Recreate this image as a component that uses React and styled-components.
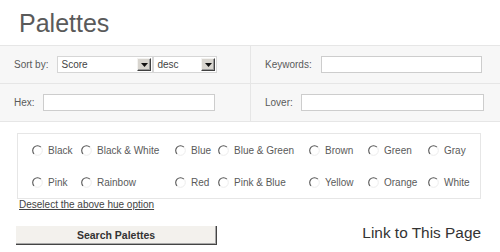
import React from "react";
import styled, { createGlobalStyle } from "styled-components";

const Global = createGlobalStyle`
  html, body { margin: 0; padding: 0; background: #fff; }
  body { font-family: "Liberation Sans", Arial, sans-serif; color: #555; }
`;

const Page = styled.div`
  width: 500px;
`;

const Header = styled.div`
  height: 34px;
  padding: 11px 0 0 19px;
`;

const Title = styled.h1`
  margin: 0;
  font-size: 25px;
  line-height: 25px;
  font-weight: normal;
  color: #5a5a5a;
`;

const Panel = styled.div`
  background: #f7f7f7;
  border-top: 1px solid #e6e6e6;
`;

const FormRow = styled.div`
  display: grid;
  grid-template-columns: 250px 250px;
  height: 37px;
  border-bottom: 1px solid #e6e6e6;
`;

const Cell = styled.div`
  display: flex;
  align-items: center;
  gap: ${(p) => p.$gap || 9}px;
  padding-left: 14px;
  border-left: ${(p) => (p.$divider ? "1px solid #e6e6e6" : "none")};
`;

const Label = styled.span`
  font-size: 10px;
  color: #5a5a5a;
`;

const TextInput = styled.input`
  box-sizing: border-box;
  width: ${(p) => p.$w}px;
  height: 17px;
  border: 1px solid #cdcdcd;
  background: #fff;
  padding: 0 3px;
  margin: 0;
  font: 10px "Liberation Sans", Arial, sans-serif;
  outline: none;
`;

const Selects = styled.div`
  display: flex;
`;

const SelectBox = styled.div`
  box-sizing: border-box;
  width: ${(p) => p.$w}px;
  height: 17px;
  display: flex;
  align-items: stretch;
  border: 1px solid #d6d6d6;
  background: #fff;
  padding: 1px;
`;

const SelectText = styled.span`
  flex: 1;
  font-size: 10px;
  line-height: 13px;
  color: #444;
  padding-left: 2px;
`;

const ArrowButton = styled.span`
  box-sizing: border-box;
  width: 14px;
  display: flex;
  align-items: center;
  justify-content: center;
  background: #d8d5cf;
  border-top: 1px solid #f4f3f1;
  border-left: 1px solid #f4f3f1;
  border-right: 1px solid #404040;
  border-bottom: 1px solid #404040;
  box-shadow: inset -1px -1px 0 #9a9a9a;
`;

const HueBox = styled.div`
  margin: 11px 19px 0 17px;
  border: 1px solid #e6e6e6;
  display: grid;
  grid-template-columns: 49px 94px 43px 91px 59px 60px 1fr;
  grid-auto-rows: 32px;
  padding-left: 14px;
`;

const HueOption = styled.label`
  display: flex;
  align-items: center;
  gap: 5px;
  font-size: 10px;
  color: #5a5a5a;
  white-space: nowrap;
`;

const Deselect = styled.a`
  display: block;
  width: fit-content;
  margin-left: 19px;
  font-size: 10px;
  line-height: 12px;
  color: #444;
  text-decoration: underline;
`;

const Bottom = styled.div`
  display: flex;
  align-items: center;
  justify-content: space-between;
  padding: 0 19px 0 16px;
  margin-top: 15px;
`;

const SearchButton = styled.button`
  box-sizing: border-box;
  width: 201px;
  height: 19px;
  margin: 0;
  padding: 0;
  background: #f3f1ed;
  border: none;
  border-right: 1px solid #444;
  border-bottom: 1px solid #444;
  box-shadow: inset -1px -1px 0 #a8a8a8;
  font: bold 10.5px "Liberation Sans", Arial, sans-serif;
  color: #333;
`;

const PageLink = styled.span`
  font-size: 15.4px;
  line-height: 18px;
  color: #333;
  margin-top: -5px;
`;

const Arrow = () => (
  <svg width="7" height="4" viewBox="0 0 7 4">
    <path d="M0 0h7L3.5 4z" fill="#111" />
  </svg>
);

const Radio = () => (
  <svg width="11" height="11" viewBox="0 0 11 11">
    <circle cx="5.5" cy="5.5" r="4.8" fill="#fff" />
    <path d="M2.1 8.9A4.8 4.8 0 0 1 8.9 2.1" fill="none" stroke="#555" strokeWidth="1.1" />
    <path d="M8.9 2.1A4.8 4.8 0 0 1 2.1 8.9" fill="none" stroke="#ececec" strokeWidth="1" />
  </svg>
);

const Select = ({ w, value }) => (
  <SelectBox $w={w}>
    <SelectText>{value}</SelectText>
    <ArrowButton>
      <Arrow />
    </ArrowButton>
  </SelectBox>
);

const hues = [
  "Black", "Black & White", "Blue", "Blue & Green", "Brown", "Green", "Gray",
  "Pink", "Rainbow", "Red", "Pink & Blue", "Yellow", "Orange", "White",
];

export default function App() {
  return (
    <Page>
      <Global />
      <Header>
        <Title>Palettes</Title>
      </Header>
      <Panel>
        <FormRow>
          <Cell>
            <Label>Sort by:</Label>
            <Selects>
              <Select w={96} value="Score" />
              <Select w={64} value="desc" />
            </Selects>
          </Cell>
          <Cell $divider>
            <Label>Keywords:</Label>
            <TextInput $w={161} />
          </Cell>
        </FormRow>
        <FormRow>
          <Cell $gap={8}>
            <Label>Hex:</Label>
            <TextInput $w={172} />
          </Cell>
          <Cell $divider $gap={8}>
            <Label>Lover:</Label>
            <TextInput $w={183} />
          </Cell>
        </FormRow>
      </Panel>
      <HueBox>
        {hues.map((h) => (
          <HueOption key={h}>
            <Radio />
            {h}
          </HueOption>
        ))}
      </HueBox>
      <Deselect href="#">Deselect the above hue option</Deselect>
      <Bottom>
        <SearchButton>Search Palettes</SearchButton>
        <PageLink>Link to This Page</PageLink>
      </Bottom>
    </Page>
  );
}
